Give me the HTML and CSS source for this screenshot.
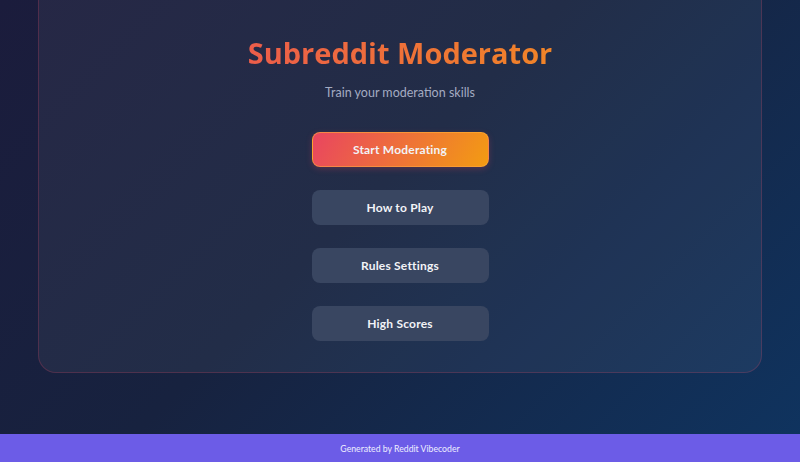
FILE: index.html
```html
<!DOCTYPE html>
<html lang="en">
<head>
<meta charset="utf-8">
<title>Subreddit Moderator</title>
<link rel="stylesheet" href="styles.css">
</head>
<body>
<main class="page">
  <section class="card">
    <h1 class="title">Subreddit Moderator</h1>
    <p class="subtitle">Train your moderation skills</p>
    <nav class="menu">
      <button class="btn btn-primary">Start Moderating</button>
      <button class="btn">How to Play</button>
      <button class="btn">Rules Settings</button>
      <button class="btn">High Scores</button>
    </nav>
  </section>
</main>
<footer class="footer">Generated by Reddit Vibecoder</footer>
</body>
</html>
```
FILE: styles.css
```css
* { box-sizing: border-box; }
html, body { margin: 0; height: 100%; }
body {
  display: flex;
  flex-direction: column;
  overflow: hidden;
  background: linear-gradient(135deg, #1b1c3c 0%, #17223f 45%, #0f3460 100%);
  font-family: "Open Sans", "Noto Sans", sans-serif;
  color: #fff;
}
.page {
  flex: 1;
  padding: 0 38px;
}
.card {
  margin-top: -20px;
  padding: 53px 20px 31px;
  border: 1px solid rgba(233, 69, 96, 0.22);
  border-radius: 18px;
  background: rgba(255, 255, 255, 0.05);
  display: flex;
  flex-direction: column;
  align-items: center;
}
.title {
  margin: 0;
  align-self: stretch;
  text-align: center;
  font-size: 29px;
  line-height: 38px;
  font-weight: 700;
  background: linear-gradient(90deg, #e94560, #f39c12);
  -webkit-background-clip: text;
  background-clip: text;
  color: transparent;
}
.subtitle {
  margin: 11px 0 0;
  font-family: "Lato", "Open Sans", sans-serif;
  font-size: 12.5px;
  line-height: 20px;
  color: #a4abc2;
}
.menu {
  margin-top: 29px;
  display: flex;
  flex-direction: column;
  gap: 23px;
}
.btn {
  width: 177px;
  height: 35px;
  border: none;
  border-radius: 8px;
  background: #394661;
  color: #f2f3f7;
  font-family: "Lato", "Open Sans", sans-serif;
  font-weight: 700;
  font-size: 12px;
  letter-spacing: 0.2px;
}
.btn-primary {
  background: linear-gradient(120deg, #e94560, #f39c12);
  border: 1px solid rgba(255, 170, 60, 0.6);
  box-shadow: 0 2px 6px rgba(233, 69, 96, 0.25);
}
.footer {
  height: 28px;
  flex: none;
  background: #6c5ce7;
  color: #eef;
  font-family: "Lato", "Open Sans", sans-serif;
  font-size: 8.7px;
  display: flex;
  align-items: center;
  justify-content: center;
}
```
